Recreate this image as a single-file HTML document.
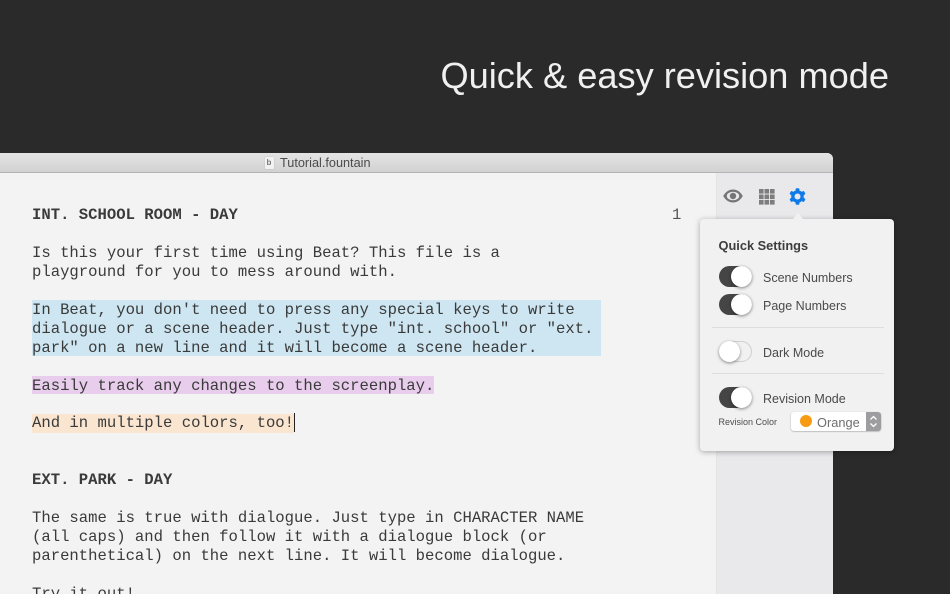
<!DOCTYPE html>
<html>
<head>
<meta charset="utf-8">
<style>
html,body{margin:0;padding:0;width:950px;height:594px;overflow:hidden;background:#2a2a2a;}
*{box-sizing:border-box;}
.abs{position:absolute;}
#title{left:300px;width:589px;top:53px;text-align:right;font:36.2px/46px "Liberation Sans",sans-serif;color:#f0f0f0;white-space:nowrap;}
#win{left:0;top:153px;width:833px;height:441px;background:#f3f3f3;border-top-right-radius:6px;overflow:hidden;}
#bar{left:0;top:0;width:833px;height:20px;background:linear-gradient(#e4e4e4,#d2d2d2);border-bottom:1px solid #b4b4b4;}
#bartitle{left:280px;top:2px;font:12.7px/17px "Liberation Sans",sans-serif;color:#4b4b4b;white-space:nowrap;}
#doc{left:264.500px;top:4px;width:9px;height:12px;background:#f2f2f2;border-radius:1px;box-shadow:0 0 1px rgba(0,0,0,.25);font:bold 8px/12px "Liberation Sans",sans-serif;color:#777;text-align:center;}
#side{left:716px;top:20px;width:117px;height:421px;background:#e9e9eb;border-left:1px solid #e4e4e4;}
.l{left:32px;font:15.6px/19px "Liberation Mono",monospace;color:#3a3a3a;white-space:pre;}
.b{font-weight:bold;}
#pop{left:700px;top:219px;width:194px;height:232px;background:#f1f1f1;border-radius:4px;box-shadow:0 1px 6px rgba(0,0,0,.32);}
.arrow{left:788px;top:210px;width:20px;height:10px;}
.sw{width:33px;height:21px;border-radius:11px;left:18.500px;}
.sw.on{background:#454545;}
.sw.off{background:#f1f1f1;border:1px solid #cfcfcf;}
.k{position:absolute;top:0;width:21px;height:21px;border-radius:50%;background:#fff;box-shadow:0 1px 3px rgba(0,0,0,.45);}
.on .k{left:12px;top:0;}
.off .k{left:-1px;top:-1px;}
.t{left:63px;font:12.500px/16px "Liberation Sans",sans-serif;color:#4a4a4a;white-space:nowrap;}
.sep{left:12px;width:172px;height:1px;background:#dedede;}
</style>
</head>
<body>
<div class="abs" id="title">Quick &amp; easy revision mode</div>

<div class="abs" id="win">
  <div class="abs" id="bar"></div>
  <div class="abs" id="doc">b</div>
  <div class="abs" id="bartitle">Tutorial.fountain</div>
  <div class="abs" id="side"></div>

  <div class="abs" style="left:32px;top:147px;width:569px;height:56px;background:#cde6f1;"></div>
  <div class="abs" style="left:32px;top:223px;width:402px;height:18px;background:#e8cdec;"></div>
  <div class="abs" style="left:32px;top:261px;width:262px;height:19px;background:#f9e5d0;"></div>
  <div class="abs" style="left:294px;top:260px;width:1px;height:19px;background:#222;"></div>

  <div class="abs l b" style="top:53px;">INT. SCHOOL ROOM - DAY</div>
  <div class="abs l" style="left:672px;top:53px;color:#555;">1</div>
  <div class="abs l" style="top:91px;">Is this your first time using Beat? This file is a</div>
  <div class="abs l" style="top:110px;">playground for you to mess around with.</div>
  <div class="abs l" style="top:148px;">In Beat, you don't need to press any special keys to write</div>
  <div class="abs l" style="top:167px;">dialogue or a scene header. Just type "int. school" or "ext.</div>
  <div class="abs l" style="top:186px;">park" on a new line and it will become a scene header.</div>
  <div class="abs l" style="top:224px;">Easily track any changes to the screenplay.</div>
  <div class="abs l" style="top:261px;">And in multiple colors, too!</div>
  <div class="abs l b" style="top:318px;">EXT. PARK - DAY</div>
  <div class="abs l" style="top:356px;">The same is true with dialogue. Just type in CHARACTER NAME</div>
  <div class="abs l" style="top:375px;">(all caps) and then follow it with a dialogue block (or</div>
  <div class="abs l" style="top:394px;">parenthetical) on the next line. It will become dialogue.</div>
  <div class="abs l" style="top:432px;">Try it out!</div>
</div>

<!-- toolbar icons -->
<svg class="abs" style="left:722px;top:188px;" width="22" height="16" viewBox="0 0 22 16">
  <path d="M1.200 8C4 3.400 7.200 1.500 11 1.500S18 3.400 20.800 8C18 12.600 14.800 14.500 11 14.500S4 12.600 1.200 8Z" fill="#757575"/>
  <ellipse cx="11" cy="8" rx="6.200" ry="4.300" fill="#e9e9eb"/>
  <circle cx="11" cy="8" r="3.200" fill="#757575"/>
</svg>
<svg class="abs" style="left:759px;top:189px;" width="16" height="16" viewBox="0 0 16 16" fill="#7d7d7d">
  <rect x="0" y="0" width="4.600" height="4.600"/><rect x="5.500" y="0" width="4.600" height="4.600"/><rect x="11" y="0" width="4.600" height="4.600"/>
  <rect x="0" y="5.500" width="4.600" height="4.600"/><rect x="5.500" y="5.500" width="4.600" height="4.600"/><rect x="11" y="5.500" width="4.600" height="4.600"/>
  <rect x="0" y="11" width="4.600" height="4.600"/><rect x="5.500" y="11" width="4.600" height="4.600"/><rect x="11" y="11" width="4.600" height="4.600"/>
</svg>
<svg class="abs" style="left:789px;top:188px;" width="17" height="17" viewBox="0 0 17 17">
  <g fill="#0f7bea">
    <circle cx="8.500" cy="8.500" r="6.300"/>
    <rect x="6.600" y="0.200" width="3.800" height="16.600" rx="1"/>
    <rect x="6.600" y="0.200" width="3.800" height="16.600" rx="1" transform="rotate(60 8.500 8.500)"/>
    <rect x="6.600" y="0.200" width="3.800" height="16.600" rx="1" transform="rotate(120 8.500 8.500)"/>
  </g>
  <circle cx="8.500" cy="8.500" r="3" fill="#e9e9eb"/>
</svg>

<!-- popover -->
<div class="abs" id="pop">
  <div class="abs" style="left:18.500px;top:19px;font:bold 12.800px/16px 'Liberation Sans',sans-serif;color:#3d3d3d;white-space:nowrap;">Quick Settings</div>

  <div class="abs sw on" style="top:47px;"><div class="k"></div></div>
  <div class="abs t" style="top:51px;">Scene Numbers</div>

  <div class="abs sw on" style="top:75px;"><div class="k"></div></div>
  <div class="abs t" style="top:79px;">Page Numbers</div>

  <div class="abs sep" style="top:108px;"></div>

  <div class="abs sw off" style="top:122px;"><div class="k"></div></div>
  <div class="abs t" style="top:126px;">Dark Mode</div>

  <div class="abs sep" style="top:154px;"></div>

  <div class="abs sw on" style="top:168px;"><div class="k"></div></div>
  <div class="abs t" style="top:172px;">Revision Mode</div>

  <div class="abs" style="left:18.500px;top:196px;font:9px/14px 'Liberation Sans',sans-serif;color:#4d4d4d;white-space:nowrap;">Revision Color</div>

  <div class="abs" style="left:91px;top:193px;width:90px;height:19px;background:#fff;border-radius:3px;box-shadow:0 0.500px 1.500px rgba(0,0,0,.35);overflow:hidden;">
    <div class="abs" style="left:9px;top:3px;width:12px;height:12px;border-radius:50%;background:#f79a14;"></div>
    <div class="abs" style="left:26px;top:1.500px;font:12.800px/17px 'Liberation Sans',sans-serif;color:#6e6e6e;">Orange</div>
    <div class="abs" style="left:75px;top:0;width:15px;height:19px;background:#9d9da1;"></div>
    <svg class="abs" style="left:75px;top:0;" width="15" height="19" viewBox="0 0 15 19" fill="none" stroke="#fff" stroke-width="1.300">
      <path d="M4.500 7.500L7.500 4.500L10.500 7.500"/>
      <path d="M4.500 11.500L7.500 14.500L10.500 11.500"/>
    </svg>
  </div>
</div>
<svg class="abs arrow" viewBox="0 0 20 10" width="20" height="10">
  <path d="M0 10C4 10 5 9 7 6.500L10 2.500L13 6.500C15 9 16 10 20 10Z" fill="#f1f1f1"/>
</svg>
</body>
</html>
